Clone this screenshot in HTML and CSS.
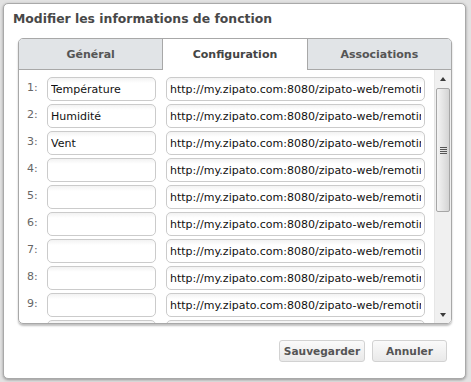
FILE: index.html
```html
<!DOCTYPE html>
<html lang="fr">
<head>
    <meta charset="UTF-8">
    <title>Modifier les informations de fonction</title>
    <link rel="stylesheet" href="styles.css">
</head>
<body>
    <div class="dialog">
        <div class="dialog-title">Modifier les informations de fonction</div>

        <div class="tabpanel">
            <div class="tabs">
                <div class="tab">Général</div>
                <div class="tab active">Configuration</div>
                <div class="tab">Associations</div>
            </div>

            <div class="tab-body">
                <div class="rows">
                    <div class="row"><span class="num">1:</span><input class="name" value="Température"><input class="url" value="http://my.zipato.com:8080/zipato-web/remoting/attribute/set"></div>
                    <div class="row"><span class="num">2:</span><input class="name" value="Humidité"><input class="url" value="http://my.zipato.com:8080/zipato-web/remoting/attribute/set"></div>
                    <div class="row"><span class="num">3:</span><input class="name" value="Vent"><input class="url" value="http://my.zipato.com:8080/zipato-web/remoting/attribute/set"></div>
                    <div class="row"><span class="num">4:</span><input class="name" value=""><input class="url" value="http://my.zipato.com:8080/zipato-web/remoting/attribute/set"></div>
                    <div class="row"><span class="num">5:</span><input class="name" value=""><input class="url" value="http://my.zipato.com:8080/zipato-web/remoting/attribute/set"></div>
                    <div class="row"><span class="num">6:</span><input class="name" value=""><input class="url" value="http://my.zipato.com:8080/zipato-web/remoting/attribute/set"></div>
                    <div class="row"><span class="num">7:</span><input class="name" value=""><input class="url" value="http://my.zipato.com:8080/zipato-web/remoting/attribute/set"></div>
                    <div class="row"><span class="num">8:</span><input class="name" value=""><input class="url" value="http://my.zipato.com:8080/zipato-web/remoting/attribute/set"></div>
                    <div class="row"><span class="num">9:</span><input class="name" value=""><input class="url" value="http://my.zipato.com:8080/zipato-web/remoting/attribute/set"></div>
                    <!-- only the top edge of row 10 shows -->
                    <div class="row"><span class="num"></span><input class="name" value=""><input class="url" value=""></div>
                </div>

                <div class="scrollbar">
                    <div class="sb-btn"><span class="arrow-up"></span></div>
                    <div class="sb-track">
                        <div class="sb-thumb"><span class="grip"></span></div>
                    </div>
                    <div class="sb-btn"><span class="arrow-down"></span></div>
                </div>
            </div>
        </div>

        <div class="dialog-buttons">
            <button class="btn btn-save">Sauvegarder</button>
            <button class="btn btn-cancel">Annuler</button>
        </div>
    </div>
</body>
</html>
```

FILE: styles.css
```css
* {
    box-sizing: border-box;
}

body {
    margin: 0;
    padding: 3px 0 0 3px;
    background: #e2e2e2;
    font-family: "DejaVu Sans", Verdana, sans-serif;
    height: 382px;
    overflow: hidden;
}

.dialog {
    width: 463px;
    height: 376px;
    background: #fff;
    border: 1px solid #a9a9a9;
    border-radius: 5px;
    box-shadow: 0 1px 3px rgba(0, 0, 0, 0.35);
}

.dialog-title {
    height: 34px;
    line-height: 30px;
    padding-left: 9px;
    font-size: 12.4px;
    font-weight: bold;
    color: #484848;
}

/* tabs */

.tabpanel {
    margin-left: 14px;
    width: 434px;
    height: 286px;
    border: 1px solid #a8a8a8;
    border-radius: 5px;
    overflow: hidden;
    box-shadow: 0 2px 2px rgba(0, 0, 0, 0.25);
    display: flex;
    flex-direction: column;
}

.tabs {
    display: flex;
    height: 31px;
}

.tab {
    flex: 1;
    text-align: center;
    line-height: 31px;
    font-size: 11px;
    font-weight: bold;
    color: #555;
    background: #e1e4e7;
    border-bottom: 1px solid #a8a8a8;
}

.tab:first-child {
    border-right: 1px solid #a8a8a8;
}

.tab:last-child {
    border-left: 1px solid #a8a8a8;
}

.tab.active {
    background: #fff;
    border-bottom-color: #fff;
    color: #444;
}

.tab-body {
    flex: 1;
    display: flex;
    min-height: 0;
}

.rows {
    flex: 1;
    overflow: hidden;
    padding: 7px 0 0 8px;
    display: flex;
    flex-direction: column;
    gap: 3px;
}

.row {
    display: flex;
    height: 24px;
    flex-shrink: 0;
}

.num {
    width: 20px;
    padding-top: 4px;
    font-size: 11px;
    color: #666;
}

.row input {
    height: 24px;
    border: 1px solid #cbcbcb;
    border-radius: 5px;
    padding: 0 3px;
    font-family: "DejaVu Sans", Verdana, sans-serif;
    font-size: 11px;
    color: #111;
    background: linear-gradient(#f2f2f2, #fff 5px);
    outline: none;
}

.row .name {
    width: 109px;
    margin-right: 10px;
}

.row .url {
    width: 259px;
}

/* fake scrollbar */

.scrollbar {
    width: 17px;
    display: flex;
    flex-direction: column;
    background: #f0f0f0;
    border-left: 1px solid #e6e6e6;
}

.sb-btn {
    height: 17px;
    display: flex;
    align-items: center;
    justify-content: center;
}

.arrow-up,
.arrow-down {
    width: 0;
    height: 0;
    border-left: 3.5px solid transparent;
    border-right: 3.5px solid transparent;
}

.arrow-up {
    border-bottom: 4px solid #3a3a3a;
}

.arrow-down {
    border-top: 4px solid #3a3a3a;
}

.sb-track {
    flex: 1;
    padding: 1px 0 0 0;
}

.sb-thumb {
    height: 124px;
    margin: 0 1px;
    border: 1px solid #a6a6a6;
    border-radius: 2px;
    background: linear-gradient(90deg, #f4f4f4, #e4e4e4 50%, #d4d4d4);
    display: flex;
    align-items: center;
    justify-content: center;
}

.grip {
    width: 7px;
    height: 7px;
    background: repeating-linear-gradient(#555 0 1px, transparent 1px 2px);
}

/* footer buttons */

.dialog-buttons {
    display: flex;
    justify-content: flex-end;
    gap: 7px;
    padding: 16px 18px 0 0;
}

.btn {
    height: 22px;
    padding: 0;
    border: 1px solid #d2d2d2;
    border-radius: 3px;
    background: linear-gradient(#fafafa, #e9e9e9);
    font-family: "DejaVu Sans", Verdana, sans-serif;
    font-size: 10.6px;
    font-weight: bold;
    color: #555;
}

.btn-save {
    width: 86px;
}

.btn-cancel {
    width: 75px;
}
```
